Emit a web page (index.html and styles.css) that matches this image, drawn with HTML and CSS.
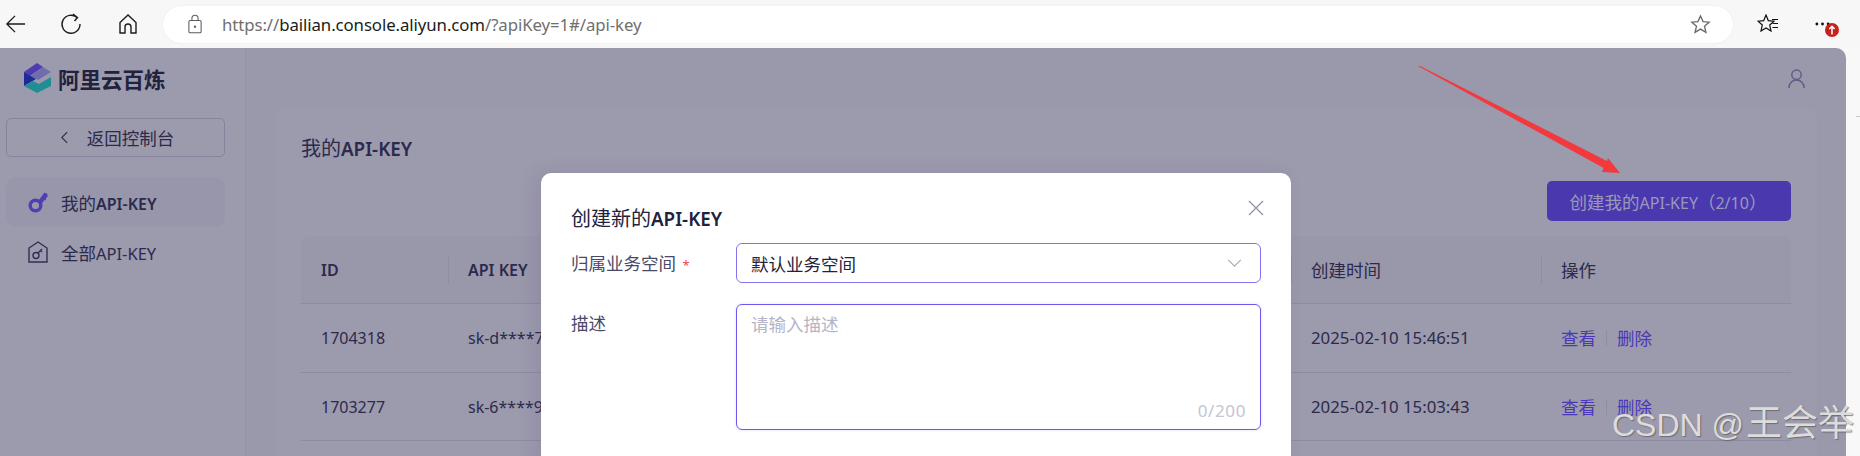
FILE: index.html
```html
<!DOCTYPE html>
<html lang="zh">
<head>
<meta charset="utf-8">
<title>阿里云百炼</title>
<link rel="stylesheet" href="styles.css">
</head>
<body>
<header class="browser">
  <svg class="nav nav-back" viewBox="0 0 22 22"><path d="M21 11H2M10.500 2.500 2 11l8.500 8.500"/></svg>
  <svg class="nav nav-reload" viewBox="0 0 22 22"><path d="M17 4.500A9 9 0 1 0 20 11M13 1l4.500 3.500L14.500 8"/></svg>
  <svg class="nav nav-home" viewBox="0 0 22 22"><path d="M11 2 3 9.500V20h5v-6a3 3 0 0 1 6 0v6h5V9.500Z"/></svg>
  <div class="address">
    <svg class="lock" viewBox="0 0 16 22"><rect x="1" y="7" width="14" height="14" rx="1.500"/><path d="M4.500 7V4.500a3.500 3.500 0 0 1 7 0V7"/><circle cx="8" cy="14" r=".8"/></svg>
    <span class="url">https://<b>bailian.console.aliyun.com</b>/?apiKey=1#/api-key</span>
    <svg class="star" viewBox="0 0 22 22"><path d="m11 2 2.700 6 6.300.6-4.800 4.200 1.500 6.400-5.700-3.400-5.700 3.400 1.500-6.400L2 8.600 8.300 8Z"/></svg>
  </div>
  <svg class="fav" viewBox="0 0 22 20"><path d="M9 1 11.300 6.600 17 7.200 12.700 11 14 17 9 14 4 17 5.300 11 1 7.200 6.700 6.600Z"/><path d="M15 5.500h6M15.500 9.500h5.500M15.500 13.500h5.500"/></svg>
  <div class="more">
    <svg class="dots" viewBox="0 0 16 4"><circle cx="2" cy="2" r="1.500"/><circle cx="8" cy="2" r="1.500"/><circle cx="14" cy="2" r="1.500"/></svg>
    <span class="badge"><svg viewBox="0 0 14 14"><path d="M7 11.500V3.500M4.300 6 7 3.300 9.700 6"/></svg></span>
  </div>
</header>

<div class="page">
  <aside class="sidebar">
    <div class="brand">
      <svg class="logo" viewBox="0 0 27 30">
        <polygon class="lg-a" points="0,9 13,0 19,4 6,13"/>
        <polygon class="lg-b" points="19,4 27,9 14,17 7,13"/>
        <polygon class="lg-c" points="0,9 12,16 0,23"/>
        <polygon class="lg-d" points="0,23 9,18 15,21 27,14 27,23 13,30"/>
      </svg>
      <span class="brand-name">阿里云百炼</span>
    </div>
    <button class="back"><svg class="back-icon" viewBox="0 0 10 16"><path d="M8 2 2 8l6 6"/></svg><span>返回控制台</span></button>
    <nav class="menu">
      <a class="item active">
        <svg class="item-icon" viewBox="0 0 20 22"><circle cx="7.500" cy="14.500" r="5.300" class="key-ring"/><path d="M10.500 9.500 16.500 1.500l3 1.500v3L18 7v2l-2 .5-3 4.500Z" class="key-bar"/></svg>
        <span><span class="cn">我的</span><span class="en">API-KEY</span></span>
      </a>
      <a class="item">
        <svg class="item-icon" viewBox="0 0 20 22"><path d="M10 1 1 7v14h18V7Z" class="house"/><circle cx="8" cy="14.500" r="3" class="house"/><path d="m10 12 4-4M12.500 9.500l1.500 1.500" class="house"/></svg>
        <span><span class="cn">全部</span><span class="en">API-KEY</span></span>
      </a>
    </nav>
  </aside>

  <main class="main">
    <div class="topbar">
      <svg class="user" viewBox="0 0 18 21"><circle cx="9" cy="6.500" r="5"/><path d="M1 20.500c0-5 3.500-8.500 8-8.500s8 3.500 8 8.500"/></svg>
    </div>
    <section class="card">
      <h2 class="card-title"><span class="cn-lg">我的</span><span class="en-lg">API-KEY</span></h2>
      <div class="actions"><button class="primary"><span class="cn">创建我的</span>API-KEY<span class="cn">（</span>2/10<span class="cn">）</span></button></div>
      <div class="table">
        <div class="row head">
          <div class="cell first">ID</div>
          <div class="cell second">API KEY</div>
          <div class="cell spacer"></div>
          <div class="cell third cn">创建时间</div>
          <div class="cell fourth cn">操作</div>
        </div>
        <div class="row">
          <div class="cell">1704318</div>
          <div class="cell">sk-d****7c</div>
          <div class="cell spacer"></div>
          <div class="cell date">2025-02-10 15:46:51</div>
          <div class="cell ops"><a class="cn">查看</a><i class="sep"></i><a class="cn">删除</a></div>
        </div>
        <div class="row">
          <div class="cell">1703277</div>
          <div class="cell">sk-6****9e</div>
          <div class="cell spacer"></div>
          <div class="cell date">2025-02-10 15:03:43</div>
          <div class="cell ops"><a class="cn">查看</a><i class="sep"></i><a class="cn">删除</a></div>
        </div>
      </div>
    </section>
  </main>

  <div class="modal">
    <svg class="close" viewBox="0 0 16 16"><path d="m1 1 14 14M15 1 1 15"/></svg>
    <h3 class="modal-title"><span class="cn-lg">创建新的</span><span class="en-lg">API-KEY</span></h3>
    <div class="form">
      <label class="label cn">归属业务空间 <em>*</em></label>
      <div class="select"><span class="cn">默认业务空间</span><svg class="chev" viewBox="0 0 16 10"><path d="m1 1 7 7 7-7"/></svg></div>
      <label class="label label-top cn">描述</label>
      <div class="textarea"><span class="placeholder cn">请输入描述</span><span class="count">0/200</span></div>
    </div>
  </div>

  <svg class="arrow" viewBox="0 0 210 115"><polygon points="-1,-1 1,-1 188,94 189,91 201,106 183,105 184.500,101"/></svg>
</div>

<div class="strip-mark"></div>
<div class="watermark">CSDN @<span class="wm-cn">王会举</span></div>
</body>
</html>
```
FILE: styles.css
```css
* { box-sizing: border-box; }
html, body { height: 100%; }
body {
  margin: 0;
  width: 1860px;
  height: 456px;
  overflow: hidden;
  position: relative;
  background: #f8f8f9;
  font-family: "Noto Sans", "Noto Sans CJK SC", sans-serif;
  font-size: 16px;
  color: #2c2a4c;
}
.cn { font-size: 17.500px; }
.cn-lg { font-size: 20px; font-weight: 400; }
.en { font-size: 16.500px; }
.en-lg { font-size: 18.800px; font-weight: 600; }

/* browser chrome */
.browser {
  height: 48px;
  background: #f7f7f7;
  display: flex;
  align-items: center;
  padding: 0 0 0 5px;
}
.browser svg { fill: none; stroke: #1c1c1c; stroke-width: 1.400; }
.nav { width: 21px; height: 22px; }
.nav-back { margin-right: 34px; }
.nav-reload { margin-right: 35px; width: 22px; }
.nav-home { margin-right: 25px; width: 22px; }
.address {
  width: 1570px;
  height: 37px;
  margin-left: -1px;
  background: #fff;
  border-radius: 19px;
  display: flex;
  align-items: center;
  padding: 0 22px 0 25px;
  box-shadow: 0 0 3px rgba(0,0,0,.05);
}
.browser .lock { width: 14px; height: 20px; stroke: #5c5c5c; stroke-width: 1.200; }
.url { margin-left: 20px; font-size: 16.800px; color: #6f6f6f; flex: 1; letter-spacing: -.08px; }
.url b { font-weight: 400; color: #1b1b1b; }
.browser .star { width: 21px; height: 21px; margin-left: -1px; stroke: #6a6a6a; }
.browser .fav { width: 22px; height: 20px; margin-left: 24px; stroke: #111; stroke-width: 1.200; }
.more { position: relative; width: 30px; margin-left: 32px; height: 20px; }
.browser .dots { position: absolute; left: 4px; top: 8px; width: 15px; height: 4px; fill: #111; stroke: none; }
.badge {
  position: absolute; left: 14px; top: 9px;
  width: 14px; height: 14px;
  background: #c4201c;
  border-radius: 50%;
  display: flex;
}
.browser .badge svg { stroke: #fff; stroke-width: 1.500; }

/* dimmed page */
.page {
  position: relative;
  width: 1846px;
  height: 408px;
  background: #9a98ab;
  border-radius: 0 10px 0 0;
  display: flex;
  overflow: hidden;
}
.sidebar {
  width: 246px;
  flex: none;
  padding: 15px 20px 0 6px;
  border-right: 1px solid #9593a7;
  background: #9c9aad;
}
.brand { display: flex; align-items: center; height: 30px; margin-left: 18px; gap: 7px; }
.logo { width: 27px; height: 30px; }
.lg-a { fill: #4f3cb0; }
.lg-b { fill: #716cad; }
.lg-c { fill: #1f2c97; }
.lg-d { fill: #1f8f95; }
.brand-name { font-size: 21.500px; font-weight: 700; color: #22223c; }
.back {
  width: 219px;
  height: 39px;
  margin-top: 25px;
  background: none;
  border: 1px solid #85839e;
  border-radius: 5px;
  display: flex;
  align-items: center;
  justify-content: center;
  gap: 18px;
  font: inherit;
  font-size: 17.500px;
  color: #2c2a4c;
  padding: 0 3px 0 6px;
}
.back-icon { width: 9px; height: 15px; fill: none; stroke: #2c2a4c; stroke-width: 1.200; }
.menu { margin-top: 20px; }
.item {
  width: 219px;
  height: 50px;
  border-radius: 10px;
  display: flex;
  align-items: center;
  padding-left: 22px;
  gap: 13px;
  color: #2c2a4c;
}
.item.active { background: #9896aa; }
.item.active .en { font-weight: 600; font-size: 16px; }
.item-icon { width: 20px; height: 22px; flex: none; }
.key-ring { fill: none; stroke: #4f3fb5; stroke-width: 3.400; }
.key-bar { fill: #4f3fb5; }
.house { fill: none; stroke: #2f2f55; stroke-width: 1.400; }

.main { flex: 1; padding: 0 29px 0 30px; min-width: 0; }
.topbar { height: 60px; display: flex; justify-content: flex-end; align-items: flex-start; padding: 20px 12px 0 0; }
.user { width: 17px; height: 21px; fill: none; stroke: #5a5d87; stroke-width: 1.500; }
.card { background: #9c9aad; border-radius: 10px 10px 0 0; height: 348px; padding: 0 26px 0 25px; }
.card-title { margin: 0; padding-top: 27px; height: 53px; font-weight: 400; line-height: 24px; color: #2c2a4c; }
.actions { display: flex; justify-content: flex-end; margin-top: 20px; }
.primary {
  width: 244px;
  height: 40px;
  background: #4a38ae;
  border: none;
  border-radius: 5px;
  color: #9a9ab8;
  font: inherit;
  padding: 0 2px 0 0;
}
.table { margin-top: 15px; }
.row {
  display: grid;
  grid-template-columns: 147px 160px 683px 250px 250px;
  height: 69px;
  border-bottom: 1px solid #8d8ba2;
  align-items: center;
}
.row:last-child { height: 68px; }
.row.head { height: 68px; background: #9997aa; border-radius: 8px 8px 0 0; font-weight: 600; }
.cell { padding-left: 20px; white-space: nowrap; line-height: 24px; position: relative; }
.date { font-size: 16.800px; }
.head .cell + .cell::before {
  content: "";
  position: absolute;
  left: 0; top: -2px; bottom: -2px;
  width: 1px;
  background: #8f8da3;
}
.head .spacer::before { display: none; }
.head .third, .head .fourth { font-weight: 400; }
.ops { display: flex; align-items: center; color: #4a38b8; }
.sep { width: 1px; height: 16px; margin: 0 10px; background: #8f8da3; }

/* modal */
.modal {
  position: absolute;
  left: 541px;
  top: 125px;
  width: 750px;
  height: 320px;
  background: #fff;
  border-radius: 10px;
  padding: 30px;
  box-shadow: -6px 0 18px rgba(70,65,110,.12);
}
.close { position: absolute; left: 707px; top: 27px; width: 16px; height: 16px; fill: none; stroke: #8f8fa6; stroke-width: 1.200; }
.modal-title { margin: 0; height: 40px; line-height: 32px; font-weight: 400; color: #22223c; }
.form { display: grid; grid-template-columns: 165px 525px; row-gap: 20px; }
.label { color: #4a4a68; line-height: 40px; }
.label-top { line-height: 36px; }
.label em { color: #f0434f; font-style: normal; font-size: 13px; margin-left: 2px; }
.select {
  height: 40px;
  border: 1px solid #8174ee;
  border-radius: 6px;
  display: flex;
  align-items: center;
  justify-content: space-between;
  padding: 0 18px 0 14px;
  color: #22223c;
}
.chev { width: 15px; height: 9px; fill: none; stroke: #a9a9ba; stroke-width: 1.200; }
.textarea {
  height: 126px;
  margin-top: -1px;
  border: 1px solid #6a58f0;
  border-radius: 6px;
  padding: 5px 14px 6px;
  display: flex;
  flex-direction: column;
  justify-content: space-between;
  box-shadow: 0 0 3px rgba(106,88,240,.2);
}
.placeholder { color: #b4b4c6; line-height: 28px; }
.count { align-self: flex-end; color: #c4c4d4; font-size: 17px; line-height: 24px; letter-spacing: .6px; }

/* annotation and overlays */
.arrow { position: absolute; left: 1419px; top: 19px; width: 210px; height: 115px; overflow: visible; }
.arrow polygon { fill: #f23a3e; }
.strip-mark { position: absolute; left: 1856px; top: 116px; width: 4px; height: 1px; background: #c8c8c8; }
.watermark {
  position: absolute;
  left: 1612px;
  top: 405px;
  font-family: "Liberation Sans", "Noto Sans CJK SC", sans-serif;
  font-size: 32px;
  line-height: 38px;
  color: #dcdcdc;
  text-shadow: 1px 1px 1px rgba(90,90,90,.7);
  white-space: nowrap;
}
.wm-cn { font-size: 36px; margin-left: 2px; }
```
